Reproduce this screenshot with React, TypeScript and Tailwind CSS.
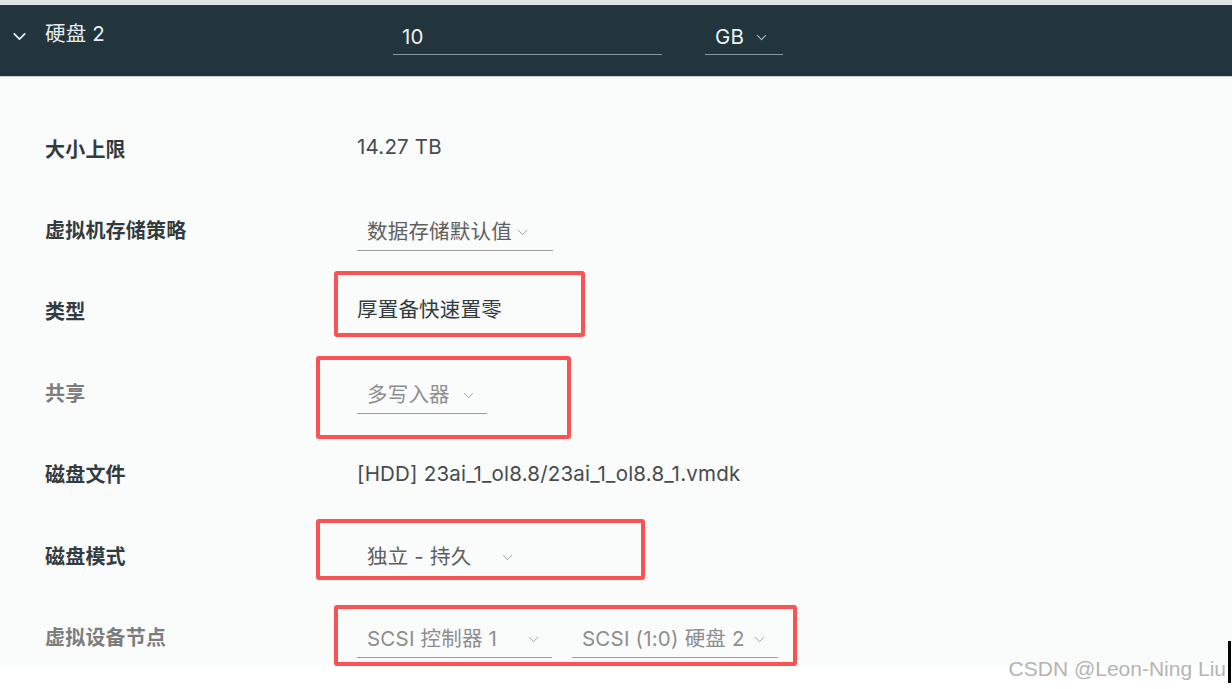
import { ChevronDown } from "lucide-react";

const font = "font-['Inter','Noto_Sans_CJK_SC',sans-serif]";

function Select({ label, width, chevronGap = "ml-auto", muted = false, underline = true }: {
    label: string;
    width: string;
    chevronGap?: string;
    muted?: boolean;
    underline?: boolean;
}) {
    return (
        <div
            className={`flex items-center h-[36px] pl-[10px] pr-[10px] ${width} ${underline ? "border-b border-[#9c9c9c]" : ""} ${muted ? "text-[#8e8e8e]" : "text-[#5f5f5f]"}`}
        >
            <span className="whitespace-nowrap">{label}</span>
            <ChevronDown size={17} strokeWidth={1.3} className={`${chevronGap} shrink-0 text-[#9a9a9a]`} />
        </div>
    );
}

function Mark({ className }: { className: string }) {
    return <div className={`absolute border-[4px] border-[#fb5353] rounded-[3px] pointer-events-none ${className}`} />;
}

function Row({ label, muted = false, children }: { label: string; muted?: boolean; children: React.ReactNode }) {
    return (
        <div className="grid grid-cols-[312px_1fr] h-[81.4px] items-center">
            <div className={`font-bold text-[20px] ${muted ? "text-[#7d7d7d]" : "text-[#333b3f]"}`}>{label}</div>
            <div className="relative h-full flex items-center">{children}</div>
        </div>
    );
}

export default function App() {
    return (
        <div className={`w-[1232px] h-[689px] bg-white overflow-hidden relative text-[20.5px] tracking-[0.2px] ${font}`}>
            <div className="h-[5px] bg-[#dfe1e2]" />
            <div className="h-[71px] bg-[#22343c] flex items-start pt-[14px] text-[#e6ecee]">
                <ChevronDown size={21} strokeWidth={2} className="ml-[9px] mr-[15px] mt-[7px]" />
                <span className="w-[348px]">硬盘 2</span>
                <div className="w-[269px] h-[36px] pl-[9px] pt-[2px] flex items-center border-b border-[#8b979c] text-[#eef2f3]">
                    10
                </div>
                <div className="ml-[43px] w-[78px] h-[36px] pl-[10px] pt-[2px] flex items-center border-b border-[#8b979c] text-[#eef2f3]">
                    <span>GB</span>
                    <ChevronDown size={17} strokeWidth={1.5} className="ml-[9px] text-[#aab4b8]" />
                </div>
            </div>
            <div className="h-[1px] bg-[#c9cdcf]" />
            <div className="h-[590px] bg-[#fafbfb] pl-[45px] pt-[32px] overflow-hidden">
                <Row label="大小上限">
                    <span className="text-[#474b4d] -mt-[4px]">14.27 TB</span>
                </Row>
                <Row label="虚拟机存储策略">
                    <div className="mt-[4px]">
                        <Select label="数据存储默认值" width="w-[196px]" chevronGap="ml-[2px]" />
                    </div>
                </Row>
                <Row label="类型">
                    <span className="text-[#333b3f] -mt-[4px]">厚置备快速置零</span>
                    <Mark className="left-[-23px] top-[-1px] w-[251px] h-[66px]" />
                </Row>
                <Row label="共享" muted>
                    <div className="mt-[4px]">
                        <Select label="多写入器" width="w-[130px]" chevronGap="ml-[10px]" muted />
                    </div>
                    <Mark className="left-[-41px] top-[3px] w-[255px] h-[83px]" />
                </Row>
                <Row label="磁盘文件">
                    <span className="text-[#474b4d] -mt-[2px]">[HDD] 23ai_1_ol8.8/23ai_1_ol8.8_1.vmdk</span>
                </Row>
                <Row label="磁盘模式">
                    <div className="mt-[2px]">
                        <Select label="独立 - 持久" width="w-[176px]" chevronGap="ml-[28px]" underline={false} />
                    </div>
                    <Mark className="left-[-41px] top-[3px] w-[329px] h-[61px]" />
                </Row>
                <Row label="虚拟设备节点" muted>
                    <div className="flex gap-[20px] mt-[4px]">
                        <Select label="SCSI 控制器 1" width="w-[195px]" muted />
                        <Select label="SCSI (1:0) 硬盘 2" width="w-[206px]" chevronGap="ml-[6px]" muted />
                    </div>
                    <Mark className="left-[-23px] top-[8px] w-[463px] h-[61px]" />
                </Row>
            </div>
            <div className="absolute right-[6px] bottom-[10px] text-[21px] tracking-normal text-[#b4b4b4] font-['Liberation_Sans',sans-serif] leading-none">
                CSDN @Leon-Ning Liu
            </div>
            <div className="absolute left-[1228px] top-[641px] w-[3px] h-[42px] bg-black" />
        </div>
    );
}
